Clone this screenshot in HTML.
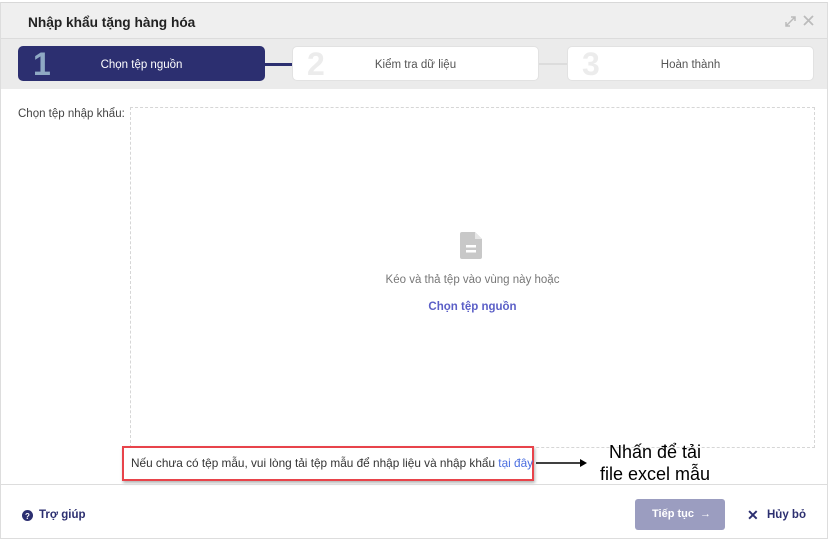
<!DOCTYPE html>
<html><head><meta charset="utf-8"><style>
*{margin:0;padding:0;box-sizing:border-box}
body{width:830px;height:541px;background:#fff;font-family:"Liberation Sans","Noto Sans CJK SC",sans-serif;position:relative;overflow:hidden;color:#333}
.a{position:absolute}
.step{position:absolute;top:46px;width:247px;height:35px;border-radius:5px;background:#fff;border:1px solid #e2e2e2}
.step .n{position:absolute;left:14px;top:-1px;font-size:32px;font-weight:bold;color:#ececec}
.step .t{position:absolute;left:0;right:0;top:12px;text-align:center;font-size:11.5px;color:#555}
</style></head><body>
<div class="a" style="left:0;top:2px;width:828px;height:537px;border:1px solid #ddd;border-top:1px solid #d8d8d8"></div>
<div class="a" style="left:1px;top:3px;width:826px;height:36px;background:#efefef;border-bottom:1px solid #dcdcdc"></div>
<div class="a" style="left:28px;top:15px;font-size:13.7px;font-weight:bold;color:#222">Nhập khẩu tặng hàng hóa</div>
<svg class="a" style="left:784px;top:14px" width="30" height="14"><path d="M2 12L11 3M7 3h4v4M2 8v4h4" stroke="#bbb" stroke-width="1.5" fill="none"/><path d="M20 2l9 9M29 2l-9 9" stroke="#bbb" stroke-width="1.8"/></svg>
<div class="a" style="left:1px;top:39px;width:826px;height:50px;background:#ebebeb"></div>
<div class="a" style="left:264px;top:63px;width:30px;height:3px;background:#2c2f70"></div>
<div class="a" style="left:538px;top:63px;width:30px;height:2px;background:#dcdcdc"></div>
<div class="step" style="left:18px;background:#2c2f70;border-color:#2c2f70"><div class="n" style="color:#8fa9c4">1</div><div class="t" style="color:#fff">Chọn tệp nguồn</div></div>
<div class="step" style="left:292px"><div class="n">2</div><div class="t">Kiểm tra dữ liệu</div></div>
<div class="step" style="left:567px"><div class="n">3</div><div class="t">Hoàn thành</div></div>
<div class="a" style="left:18px;top:108px;font-size:11.5px;color:#444">Chọn tệp nhập khẩu:</div>
<div class="a" style="left:130px;top:107px;width:685px;height:341px;border:1px dashed #d6d6d6"></div>
<svg class="a" style="left:460px;top:232px" width="24" height="27"><path d="M2 0h13l7 7v18a2 2 0 0 1-2 2H2a2 2 0 0 1-2-2V2a2 2 0 0 1 2-2z" fill="#c8c8c8"/><path d="M15 0v7h7" fill="#e6e6e6"/><rect x="6" y="13" width="10" height="2.5" fill="#fff"/><rect x="6" y="18" width="10" height="2.5" fill="#fff"/></svg>
<div class="a" style="left:330px;top:274px;width:285px;text-align:center;font-size:11.5px;color:#777">Kéo và thả tệp vào vùng này hoặc</div>
<div class="a" style="left:330px;top:301px;width:285px;text-align:center;font-size:11.5px;font-weight:bold;color:#5b5fc7">Chọn tệp nguồn</div>
<div class="a" style="left:122px;top:446px;width:412px;height:35px;border:2px solid #e8434a;box-shadow:1px 2px 3px rgba(0,0,0,.3);background:#fff"></div>
<div class="a" style="left:131px;top:456px;font-size:11.8px;color:#333;white-space:nowrap">Nếu chưa có tệp mẫu, vui lòng tải tệp mẫu để nhập liệu và nhập khẩu <span style="color:#4a6ee0">tại đây</span></div>
<svg class="a" style="left:536px;top:458px" width="52" height="10"><path d="M0 5h46" stroke="#000" stroke-width="1.5"/><path d="M44 1l7 4-7 4z" fill="#000"/></svg>
<div class="a" style="left:590px;top:441px;width:130px;text-align:center;font-size:18px;line-height:22px;color:#000">Nhấn để tải<br>file excel mẫu</div>
<div class="a" style="left:1px;top:484px;width:826px;height:1px;background:#ddd"></div>
<svg class="a" style="left:22px;top:510px" width="11" height="11"><circle cx="5.5" cy="5.5" r="5.5" fill="#2c2f70"/><text x="5.5" y="9" font-size="8" font-weight="bold" fill="#fff" text-anchor="middle" font-family="Liberation Sans">?</text></svg>
<div class="a" style="left:39px;top:509px;font-size:11.5px;font-weight:bold;color:#2c2f70">Trợ giúp</div>
<div class="a" style="left:635px;top:499px;width:90px;height:31px;background:#9b9dc0;border-radius:3px;color:#fff;font-size:11px;font-weight:bold;padding:9px 0 0 17px">Tiếp tục <span style="font-weight:normal;margin-left:3px">→</span></div>
<div class="a" style="left:747px;top:507px;font-size:14px;color:#2c2f70;font-weight:bold">✕</div>
<div class="a" style="left:767px;top:509px;font-size:11.5px;font-weight:bold;color:#2c2f70">Hủy bỏ</div>
</body></html>
